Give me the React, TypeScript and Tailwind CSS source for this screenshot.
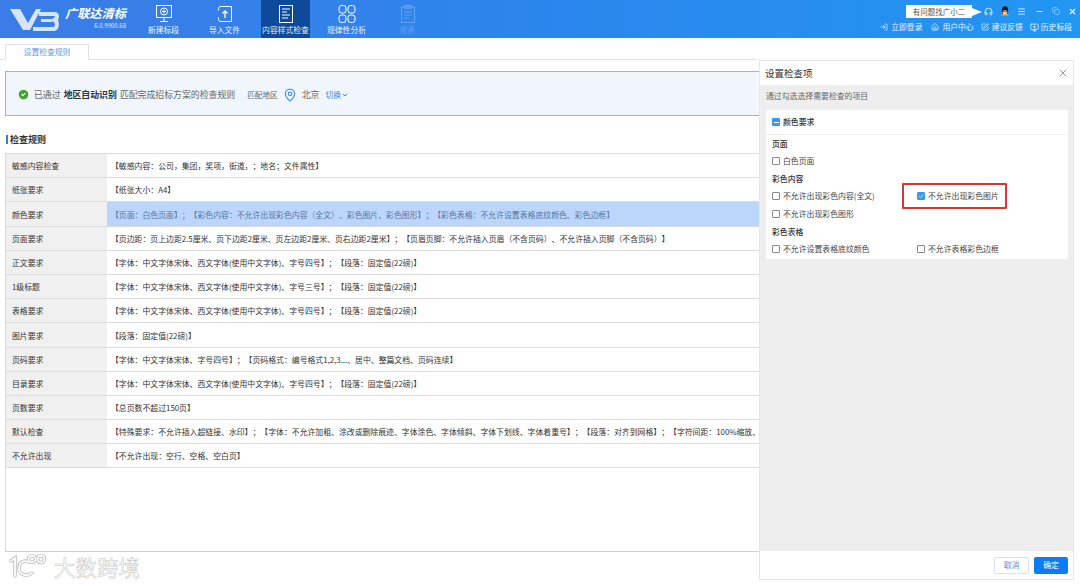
import {
  CircleCheck,
  ChevronDown,
  Headphones,
  House,
  LogIn,
  Menu,
  Minus,
  SquarePen,
  Copy,
  X,
  Check,
  MapPin,
  MonitorDown,
} from "lucide-react";

const font = { fontFamily: "'Noto Sans CJK SC', 'Liberation Sans', sans-serif" };

const body = "【字体：中文字体宋体、西文字体(使用中文字体)、字号四号】；【段落：固定值(22磅)】";

const rules = [
  { label: "敏感内容检查", text: "【敏感内容：公司，集团，奖项，街道，；地名；文件属性】" },
  { label: "纸张要求", text: "【纸张大小：A4】" },
  {
    label: "颜色要求",
    text: "【页面：白色页面】；【彩色内容：不允许出现彩色内容（全文）、彩色图片、彩色图形】；【彩色表格：不允许设置表格底纹颜色、彩色边框】",
    active: true,
  },
  {
    label: "页面要求",
    text: "【页边距：页上边距2.5厘米、页下边距2厘米、页左边距2厘米、页右边距2厘米】；【页眉页脚：不允许插入页眉（不含页码）、不允许插入页脚（不含页码）】",
  },
  { label: "正文要求", text: body },
  { label: "1级标题", text: "【字体：中文字体宋体、西文字体(使用中文字体)、字号三号】；【段落：固定值(22磅)】" },
  { label: "表格要求", text: body },
  { label: "图片要求", text: "【段落：固定值(22磅)】" },
  { label: "页码要求", text: "【字体：中文字体宋体、字号四号】；【页码格式：编号格式1,2,3...、居中、整篇文档、页码连续】" },
  { label: "目录要求", text: body },
  { label: "页数要求", text: "【总页数不超过150页】" },
  {
    label: "默认检查",
    text: "【特殊要求：不允许插入超链接、水印】；【字体：不允许加粗、涂改或删除痕迹、字体涂色、字体倾斜、字体下划线、字体着重号】；【段落：对齐到网格】；【字符间距：100%缩放、",
  },
  { label: "不允许出现", text: "【不允许出现：空行、空格、空白页】" },
];

function Logo() {
  return (
    <svg width="52" height="30" viewBox="0 0 52 30" fill="none" className="shrink-0">
      <path d="M1 4h10l8 14L27 4h5L21 25h-7z" fill="#fff" fillOpacity="0.8" />
      <path
        d="M30 9h15c4 0 4 5 0 6 4 1 4 9-1 9H24"
        stroke="#fff"
        strokeOpacity="0.8"
        strokeWidth="4"
        strokeLinejoin="round"
      />
      <path d="M32 15.500h11" stroke="#fff" strokeOpacity="0.8" strokeWidth="3" />
    </svg>
  );
}

function NavIcon({ name }: { name: string }) {
  const props = {
    width: 20,
    height: 20,
    viewBox: "0 0 20 20",
    fill: "none",
    stroke: "currentColor",
    strokeWidth: 1,
  };
  if (name === "new")
    return (
      <svg {...props}>
        <rect x="2.500" y="1.500" width="15" height="12" />
        <circle cx="10" cy="7.500" r="3.500" />
        <path d="M10 5.500v4M8 7.500h4M10 13.500v3.500M6 17.500h8" />
      </svg>
    );
  if (name === "import")
    return (
      <svg {...props}>
        <path d="M6 2.500h10.500v15H6M6 2.500c-1.500 0-2.500 1-2.500 2v2M6 17.500c-1.500 0-2.500-1-2.500-2v-2" />
        <path d="M10 14V7M7.500 9.500 10 7l2.500 2.500" strokeWidth="1.300" />
      </svg>
    );
  if (name === "check")
    return (
      <svg {...props}>
        <rect x="3.500" y="1.500" width="13" height="17" />
        <path d="M6 5h8M6 8h5M6 11h8M6 14h6" strokeWidth="1.200" />
      </svg>
    );
  if (name === "rule")
    return (
      <svg {...props}>
        <rect x="2" y="1.500" width="7" height="7.500" rx="2.500" />
        <rect x="11" y="1.500" width="7" height="7.500" rx="2.500" />
        <rect x="2" y="11" width="7" height="7.500" rx="2.500" />
        <rect x="11" y="11" width="7" height="7.500" rx="2.500" />
      </svg>
    );
  return (
    <svg {...props}>
      <rect x="3.500" y="3" width="13" height="15.500" />
      <rect x="7" y="1.500" width="6" height="3" />
      <path d="M6 8h8M6 11h8M6 14h5" />
    </svg>
  );
}

const navItems = [
  { icon: "new", label: "新建标段" },
  { icon: "import", label: "导入文件" },
  { icon: "check", label: "内容样式检查", active: true },
  { icon: "rule", label: "规律性分析" },
  { icon: "report", label: "报表", disabled: true },
];

function Penguin() {
  return (
    <svg width="8" height="10" viewBox="0 0 8 10">
      <ellipse cx="4" cy="4.500" rx="3.200" ry="4.300" fill="#1c1c1c" />
      <ellipse cx="4" cy="6.500" rx="2.200" ry="2.300" fill="#fff" />
      <path d="M1 5.200h6v1.200H1z" fill="#e5352b" />
      <path d="M0 9.500 2 8h4l2 1.500z" fill="#f5b021" />
    </svg>
  );
}

function Header() {
  return (
    <header className="h-[38px] shrink-0 flex bg-gradient-to-r from-[#3b7ce6] via-[#2b86ec] to-[#2196f3] text-white">
      <div className="w-[139px] shrink-0 flex pl-[9px] pt-[5px]">
        <Logo />
        <div className="pl-[4px] w-[66px] shrink-0 flex flex-col items-end">
          <span className="text-[12.200px] leading-[14px] font-bold italic w-full text-left pt-[1px] whitespace-nowrap">
            广联达清标
          </span>
          <span className="text-[6px] leading-[8px] mt-[2px] text-white/80 pr-[1px]">6.0.9900.68</span>
        </div>
      </div>
      <nav className="flex gap-[12px]">
        {navItems.map((item) => (
          <div
            key={item.label}
            className={`w-[49px] flex flex-col items-center pt-[4px] ${item.active ? "bg-[#0e4a9b]" : ""} ${
              item.disabled ? "text-white/25" : ""
            }`}
          >
            <NavIcon name={item.icon} />
            <span className="text-[7.800px] leading-[10px] mt-[1px] whitespace-nowrap opacity-90">{item.label}</span>
          </div>
        ))}
      </nav>
      <div className="ml-auto flex flex-col items-end pr-[8px]">
        <div className="flex items-center h-[14px] mt-[4px] mr-[-5px]">
          <div className="relative mr-[12px] bg-white text-[#555] text-[7.500px] leading-[13px] h-[13px] w-[66px] text-center">
            有问题找广小二
            <span className="absolute left-full top-[3px] w-0 h-0 border-y-[4px] border-y-transparent border-l-[10px] border-l-white" />
          </div>
          <div className="flex items-center gap-[8px]">
            <Headphones size={9} />
            <Penguin />
            <Menu size={9} />
            <Minus size={9} className="ml-[1px]" />
            <Copy size={8} className="opacity-60" />
            <X size={9} strokeWidth={3} />
          </div>
        </div>
        <div className="flex items-center mt-[3px] text-[7.800px] leading-[12px] text-white/90">
          <span className="flex items-center gap-[3px]">
            <LogIn size={8} />
            立即登录
          </span>
          <span className="flex items-center gap-[3px] ml-[9px]">
            <House size={8} />
            用户中心
          </span>
          <span className="flex items-center gap-[3px] ml-[7px]">
            <SquarePen size={8} />
            建议反馈
          </span>
          <span className="flex items-center gap-[2px] ml-[7px]">
            <MonitorDown size={9} />
            历史标段
          </span>
        </div>
      </div>
    </header>
  );
}

function Banner() {
  return (
    <div className="h-[45px] mt-[11px] ml-[5px] w-[800px] shrink-0 border border-[#8cb7e6] bg-[#f1f6fd] flex items-center pt-[2px] pl-[11px] text-[8.900px] text-[#666] whitespace-nowrap">
      <CircleCheck size={13} className="text-white fill-[#3fa535] mr-[4px]" />
      已通过
      <b className="font-bold text-[#333] mx-[3px]">地区自动识别</b>
      匹配完成招标方案的检查规则
      <span className="ml-[12px] text-[7.600px]">匹配地区</span>
      <MapPin size={14} className="text-[#3d94e8] mx-[5px]" />
      北京
      <span className="ml-[6px] text-[#3b8ae6] text-[7.800px] flex items-center">
        切换
        <ChevronDown size={8} strokeWidth={3} />
      </span>
    </div>
  );
}

function RuleTable() {
  return (
    <div className="mx-[5px] w-[800px] h-[399px] shrink-0 border border-[#dcdcdc] border-b-[#d0d0d0]">
      {rules.map((rule) => (
        <div key={rule.label} className="flex h-[24.200px] border-b border-[#dcdcdc] text-[7.860px] text-[#333]">
          <div className="w-[101px] shrink-0 bg-[#f0f0f0] pl-[6px] pt-[1px] flex items-center">{rule.label}</div>
          <div
            className={`flex-1 min-w-0 pl-[4px] pt-[1px] flex items-center whitespace-nowrap overflow-hidden ${
              rule.active ? "bg-[#bcd6fb] text-[#56749f]" : ""
            }`}
          >
            {rule.text}
          </div>
        </div>
      ))}
    </div>
  );
}

function Box({ checked }: { checked?: boolean }) {
  return (
    <span
      className={`w-[8px] h-[8px] shrink-0 rounded-[1px] flex items-center justify-center border ${
        checked ? "bg-[#3a96f0] border-[#3a96f0]" : "bg-white border-[#888]"
      }`}
    >
      {checked && <Check size={7} strokeWidth={3} className="text-white" />}
    </span>
  );
}

function Option({ label, checked }: { label: string; checked?: boolean }) {
  return (
    <label className="flex items-center gap-[3px] h-[18px] whitespace-nowrap text-[7.860px] text-[#444]">
      <Box checked={checked} />
      {label}
    </label>
  );
}

function GroupTitle({ children }: { children: string }) {
  return <div className="h-[17px] flex items-center text-[7.860px] font-medium text-[#333]">{children}</div>;
}

function SettingsPanel() {
  return (
    <aside className="w-[315px] shrink-0 h-[520px] mt-[22px] flex flex-col bg-[#eeeeee] border border-[#e6e6e6]">
      <div className="h-[24px] shrink-0 bg-white flex items-center justify-between pl-[5px] pr-[4px]">
        <span className="text-[9.500px] text-[#333]">设置检查项</span>
        <X size={12} className="text-[#999]" />
      </div>
      <div className="flex-1 pl-[6px]">
        <p className="h-[25px] pb-[3px] flex items-center text-[7.860px] text-[#666]">通过勾选选择需要检查的项目</p>
        <div className="w-[302px] h-[149px] bg-white rounded-[2px]">
          <div className="h-[25px] flex items-center gap-[3px] px-[6px] border-b border-[#efefef] text-[7.860px] font-medium text-[#333]">
            <span className="w-[8px] h-[8px] rounded-[1px] bg-[#3a96f0] flex items-center justify-center">
              <span className="w-[5px] h-[1px] bg-white" />
            </span>
            颜色要求
          </div>
          <div className="px-[6px]">
            <GroupTitle>页面</GroupTitle>
            <Option label="白色页面" />
            <GroupTitle>彩色内容</GroupTitle>
            <div className="grid grid-cols-[145px_1fr]">
              <Option label="不允许出现彩色内容(全文)" />
              <div className="relative">
                <Option label="不允许出现彩色图片" checked />
                <span className="absolute left-[-15px] top-[-4px] w-[105px] h-[26px] border-2 border-[#d8382c] rounded-[1px]" />
              </div>
              <Option label="不允许出现彩色图形" />
            </div>
            <GroupTitle>彩色表格</GroupTitle>
            <div className="grid grid-cols-[145px_1fr]">
              <Option label="不允许设置表格底纹颜色" />
              <Option label="不允许表格彩色边框" />
            </div>
          </div>
        </div>
      </div>
      <div className="h-[28px] shrink-0 bg-white flex items-center justify-end gap-[5px] pr-[5px] text-[7.800px]">
        <button className="w-[35px] h-[17px] rounded-[2px] border border-[#d8e2ee] text-[#4a90e2]">取消</button>
        <button className="w-[34px] h-[17px] rounded-[2px] bg-[#0a7cf5] text-white">确定</button>
      </div>
    </aside>
  );
}

const markPaths = (
  <>
    <path d="M3 8 7 5v18" />
    <path d="M21 9c-7-3-10 2-10 6 0 7 8 9 13 5" />
    <circle cx="24" cy="6" r="3.500" />
    <circle cx="33" cy="6" r="3.500" />
  </>
);

function Watermark() {
  return (
    <div className="absolute left-[8px] top-[552px] flex items-center gap-[6px] text-white">
      <svg width="40" height="26" viewBox="0 0 40 26" fill="none" strokeLinecap="round">
        <g stroke="#bdbdbd" strokeWidth="3.500">
          {markPaths}
        </g>
        <g stroke="#fff" strokeWidth="1.800">
          {markPaths}
        </g>
      </svg>
      <span className="text-[21.500px] leading-[26px] pt-[2px] [-webkit-text-stroke:0.5px_#c4c4c4]">大数跨境</span>
    </div>
  );
}

export default function App() {
  return (
    <div
      className="relative w-[1080px] h-[585px] overflow-hidden bg-white flex flex-col [text-spacing-trim:space-all]"
      style={font}
    >
      <Header />
      <div className="flex-1 flex min-h-0">
        <main className="w-[759px] shrink-0 flex flex-col overflow-hidden pt-[6px]">
          <div className="h-[16px] shrink-0 border-b border-[#e2e2e2] pl-[5px]">
            <div className="w-[84px] h-[16px] border border-b-white border-[#e2e2e2] bg-white text-[#5b9be6] text-[7.800px] flex items-center justify-center">
              设置检查规则
            </div>
          </div>
          <Banner />
          <div className="h-[37px] shrink-0 flex items-center pt-[10px] pl-[6px] text-[9px] font-bold text-[#333]">
            <span className="w-[2px] h-[9px] bg-[#2f7fe0] mr-[2px]" />
            检查规则
          </div>
          <RuleTable />
        </main>
        <SettingsPanel />
      </div>
      <Watermark />
    </div>
  );
}
